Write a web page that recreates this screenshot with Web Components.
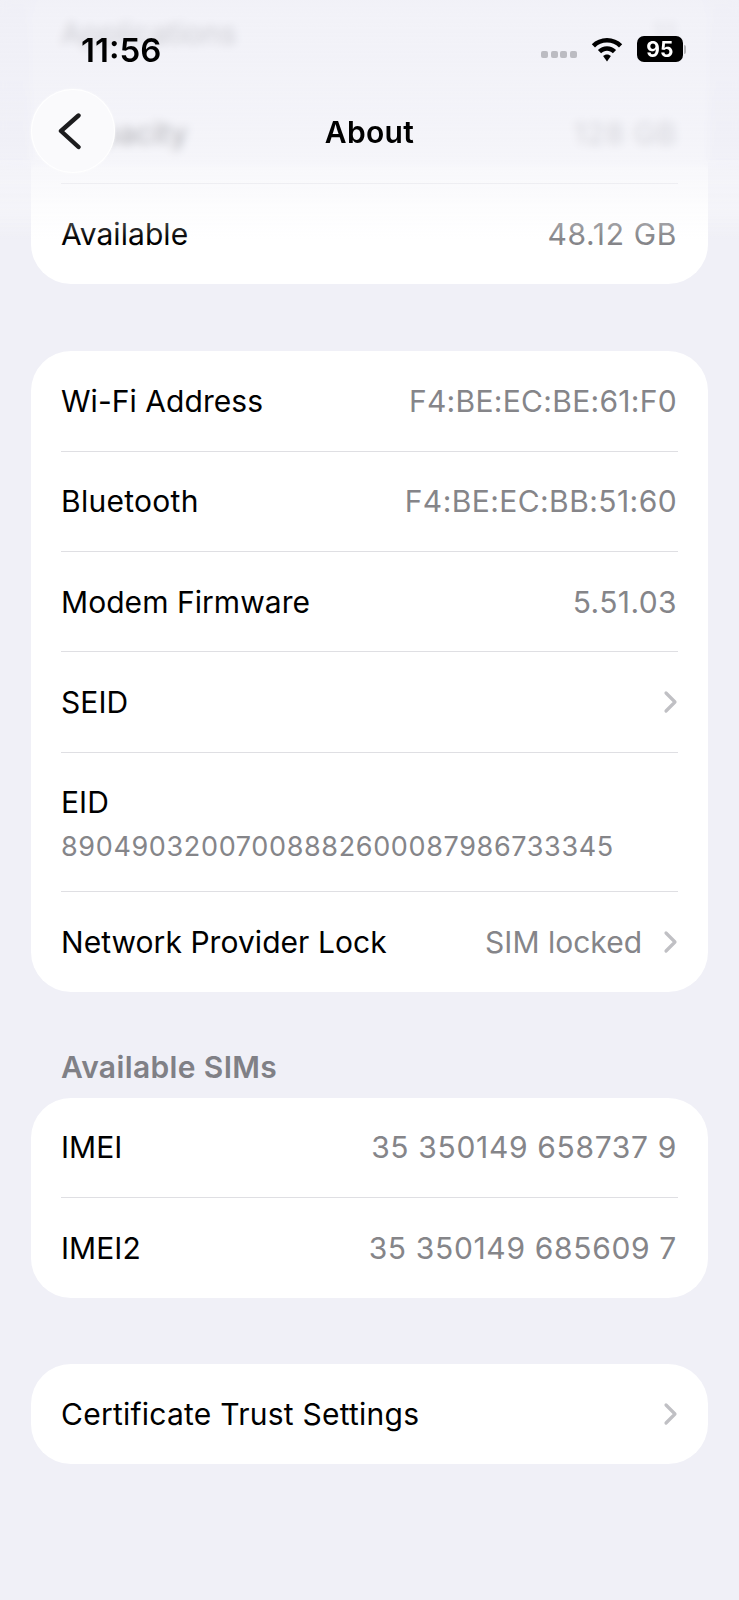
<!DOCTYPE html>
<html lang="en"><head><meta charset="utf-8"><title>About</title>
<style>
html,body{margin:0;padding:0;background:#f0f0f7}
body{font-family:Inter,"Liberation Sans",sans-serif;width:739px;height:1600px;overflow:hidden;position:relative}
</style></head><body>
<template id="t-page"><style>
:host{display:block;height:1600px;overflow:hidden;padding:0 31px;box-sizing:border-box;background:#f0f0f7}
.s{display:flex;flex-direction:column;margin-top:-17px}
</style><div class="s"><slot></slot></div></template>

<template id="t-group"><style>
:host{display:block;background:#fff;border-radius:40px;overflow:hidden;margin-bottom:var(--gap,67px)}
</style><slot></slot></template>

<template id="t-row"><style>
:host{display:block;height:var(--h,100.4px);padding:0 30px;box-sizing:border-box}
.r{height:100%;box-sizing:border-box;display:flex;align-items:center;justify-content:space-between;border-bottom:1px solid #dfdfe3}
:host([last]) .r{border-bottom:0}
.l{font-size:30px;letter-spacing:var(--ls,.05px);color:#000;white-space:nowrap}
.v{display:flex;align-items:center;font-size:30px;letter-spacing:var(--vs,.3px);color:#858589;white-space:nowrap;margin-right:1px}
svg{display:block;margin-left:20px;margin-right:-1px}
</style><div class="r"><span class="l"></span><span class="v"></span></div></template>

<template id="t-eid"><style>
:host{display:block;height:139px;padding:0 30px;box-sizing:border-box}
.r{height:100%;box-sizing:border-box;border-bottom:1px solid #dfdfe3;padding-top:31px}
.l{font-size:30px;letter-spacing:.05px;color:#000;line-height:36px}
.v{font-size:27px;letter-spacing:.64px;color:#858589;line-height:32px;margin-top:11px;white-space:nowrap}
</style><div class="r"><div class="l"></div><div class="v"></div></div></template>

<template id="t-head"><style>
:host{display:block;margin:-35px 0 13px 30px;font-size:30px;font-weight:600;letter-spacing:.36px;color:#808086;line-height:36px}
</style><slot></slot></template>

<template id="t-bar"><style>
:host{display:block;position:absolute;left:0;top:0;width:739px;height:240px;pointer-events:none}
.blur{position:absolute;left:0;right:0;top:0;height:170px;-webkit-backdrop-filter:blur(5px);backdrop-filter:blur(5px);background:linear-gradient(#f0f0f7e0 0,#f0f0f7d0 80px,#f0f0f7b8 140px,#f2f2f8b0 170px);-webkit-mask-image:linear-gradient(#000 0,#000 158px,#0000 170px);mask-image:linear-gradient(#000 0,#000 158px,#0000 170px)}
.fade{position:absolute;left:0;right:0;top:160px;height:80px;background:linear-gradient(#f4f4f9b0 0,#f6f6faa0 24px,#fafafc70 50px,#fff0 80px)}
.time{position:absolute;left:81px;top:31px;font-size:33px;font-weight:600;letter-spacing:0;line-height:38px;color:#000}
.title{position:absolute;left:0;right:0;top:113px;text-align:center;font-size:30px;font-weight:600;letter-spacing:.3px;line-height:38px;color:#000}
.back{position:absolute;left:31px;top:89px;width:84px;height:84px;border-radius:50%;background:#fafafc;box-shadow:0 0 0 1px #ffffff inset,0 0 3px #ffffffc0}
.back svg{position:absolute;left:26.500px;top:22px;display:block}
.status{position:absolute;left:541px;top:36px;display:flex;align-items:center}
.dots{display:flex;gap:2.600px;margin-top:11px;margin-right:14px}
.dots i{display:block;width:7px;height:7px;border-radius:2px;background:#bcbcc2}
.bat{width:46px;height:26px;border-radius:7px;background:#000;color:#fff;font-size:21px;font-weight:700;display:flex;align-items:center;justify-content:center;margin-left:14px;letter-spacing:.1px}
.nub{width:2px;height:9px;background:#b5b5b8;border-radius:0 2px 2px 0;margin-left:1px}
</style>
<div class="blur"></div><div class="fade"></div>
<span class="time">11:56</span>
<div class="status">
<div class="dots"><i></i><i></i><i></i><i></i></div>
<svg width="32" height="25" viewBox="0 0 32 25" aria-hidden="true"><path d="M16 1C10 1 4.800 3.300 .8 7.200L4 10.500C7.100 7.500 11.300 5.600 16 5.600S24.900 7.500 28 10.500L31.200 7.200C27.200 3.300 22 1 16 1Z"/><path d="M16 9.200C12.500 9.200 9.300 10.600 6.900 12.900L10.100 16.200C11.700 14.700 13.700 13.800 16 13.800S20.300 14.700 21.900 16.200L25.100 12.900C22.700 10.600 19.500 9.200 16 9.200Z"/><path d="M16 17.400C14.500 17.400 13.100 18 12.100 19L16 24.500L19.900 19C18.900 18 17.500 17.400 16 17.400Z"/></svg>
<div class="bat">95</div><div class="nub"></div>
</div>
<div class="back"><svg width="30" height="40" viewBox="0 0 30 40" aria-hidden="true"><path d="M20.500 4.500 3 20 20.500 36" fill="none" stroke="#1c1c1e" stroke-width="4.400" stroke-linecap="round" stroke-linejoin="round"/></svg></div>
<div class="title">About</div>
</template>

<about-page>
<set-group>
<set-row label="Applications" value="11"></set-row>
<set-row label="Capacity" value="128 GB" style="--vs:.65px"></set-row>
<set-row label="Available" value="48.12 GB" last style="--vs:.65px"></set-row>
</set-group>
<set-group style="--gap:92px">
<set-row label="Wi-Fi Address" value="F4:BE:EC:BE:61:F0"></set-row>
<set-row label="Bluetooth" value="F4:BE:EC:BB:51:60" style="--ls:.28px;--vs:.42px"></set-row>
<set-row label="Modem Firmware" value="5.51.03" style="--vs:.4px"></set-row>
<set-row label="SEID" chevron></set-row>
<set-eid label="EID" value="89049032007008882600087986733345"></set-eid>
<set-row label="Network Provider Lock" value="SIM locked" chevron last style="--vs:0px"></set-row>
</set-group>
<set-head>Available SIMs</set-head>
<set-group style="--gap:66.500px">
<set-row label="IMEI" value="35 350149 658737 9" style="--vs:.66px;--h:99.400px"></set-row>
<set-row label="IMEI2" value="35 350149 685609 7" last style="--vs:.66px;--h:100px"></set-row>
</set-group>
<set-group>
<set-row label="Certificate Trust Settings" chevron last style="--ls:.24px"></set-row>
</set-group>
</about-page>
<about-bar></about-bar>

<script>
const mount=(el,id)=>{const r=el.attachShadow({mode:'open'});r.appendChild(document.getElementById(id).content.cloneNode(true));return r};
class AboutPage extends HTMLElement{constructor(){super();mount(this,'t-page')}}
class SetGroup extends HTMLElement{constructor(){super();mount(this,'t-group')}}
class SetHead extends HTMLElement{constructor(){super();mount(this,'t-head')}}
class AboutBar extends HTMLElement{constructor(){super();mount(this,'t-bar')}}
class SetRow extends HTMLElement{
 connectedCallback(){
  if(this.shadowRoot)return;
  const r=mount(this,'t-row');
  r.querySelector('.l').textContent=this.getAttribute('label');
  const v=r.querySelector('.v');
  if(this.hasAttribute('value'))v.append(this.getAttribute('value'));
  if(this.hasAttribute('chevron'))v.insertAdjacentHTML('beforeend','<svg width="16" height="24" viewBox="0 0 16 24" aria-hidden="true"><path d="M4 3 13 12 4 21" fill="none" stroke="#c0c0c4" stroke-width="3.200" stroke-linecap="round" stroke-linejoin="round"/></svg>');
 }
}
class SetEid extends HTMLElement{
 connectedCallback(){
  if(this.shadowRoot)return;
  const r=mount(this,'t-eid');
  r.querySelector('.l').textContent=this.getAttribute('label');
  r.querySelector('.v').textContent=this.getAttribute('value');
 }
}
customElements.define('about-page',AboutPage);
customElements.define('set-group',SetGroup);
customElements.define('set-head',SetHead);
customElements.define('about-bar',AboutBar);
customElements.define('set-row',SetRow);
customElements.define('set-eid',SetEid);
</script>
</body></html>
